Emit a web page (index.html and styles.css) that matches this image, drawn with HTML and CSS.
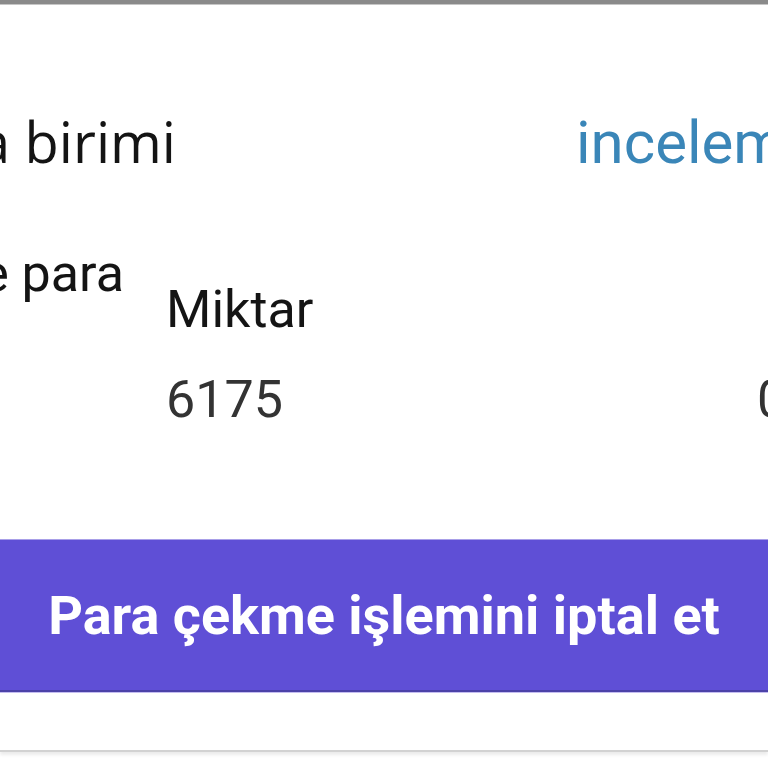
FILE: index.html
```html
<!DOCTYPE html>
<html lang="tr">
  <head>
    <meta charset="UTF-8" />
    <meta name="viewport" content="width=device-width,initial-scale=1.0" />
    <title>Para çekme</title>
    <link rel="stylesheet" href="styles.css">
  </head>
  <body>
    <div class="top-line"></div>
    <div class="sheet">
      <div class="head">
        <div class="head-label">
          <span>Para birimi</span>
        </div>
        <a class="review-link" href="#">inceleme</a>
      </div>
      <div class="details">
        <div class="detail-label">
          <span>Çekme para</span>
        </div>
        <div class="amount-col">
          <div class="col-title">Miktar</div>
          <div class="col-value">6175</div>
        </div>
        <div class="fee-col">
          <div class="col-title">&nbsp;</div>
          <div class="col-value">0,00</div>
        </div>
      </div>
      <button class="cancel-button" type="button">Para çekme işlemini iptal et</button>
      <div class="bottom-space"></div>
    </div>
  </body>
</html>
```

FILE: styles.css
```css
html,
body {
  margin: 0;
  width: 768px;
  height: 768px;
  overflow: hidden;
  background: #fff;
}
.top-line {
  height: 4px;
  background-color: #8a8a8a;
  border-bottom: 1px solid #c6c6c6;
}
.sheet {
  white-space: nowrap;
}
.head {
  display: flex;
  align-items: baseline;
  padding-top: 108px;
}
.head-label {
  display: flex;
  justify-content: flex-end;
  width: 176px;
  flex-shrink: 0;
  font-family: "Open Sans", sans-serif;
  font-size: 56px;
  line-height: 1;
  color: #141414;
}
.review-link {
  margin-left: 400px;
  font-family: Roboto, sans-serif;
  font-size: 60px;
  line-height: 1;
  color: #3a86b8;
  text-decoration: none;
}
.details {
  display: flex;
  align-items: flex-start;
  margin-top: 75px;
  font-family: Roboto, sans-serif;
}
.detail-label {
  display: flex;
  justify-content: flex-end;
  width: 124px;
  margin-right: 42px;
  flex-shrink: 0;
  font-size: 52px;
  line-height: 1;
  color: #141414;
}
.amount-col {
  width: 591px;
  flex-shrink: 0;
  margin-top: 36px;
}
.fee-col {
  margin-top: 36px;
}
.col-title {
  font-size: 52px;
  line-height: 1;
  color: #141414;
}
.col-value {
  margin-top: 38px;
  font-size: 52px;
  line-height: 1;
  color: #333;
}
.cancel-button {
  display: block;
  width: 100%;
  height: 153px;
  margin-top: 113px;
  padding: 0;
  border: 0;
  border-top: 1px solid #a89fe8;
  border-bottom: 2px solid #4b41a8;
  box-shadow: 0 1px 0 #c4bdf0;
  background-color: #5f4fd6;
  color: #fff;
  font-family: Roboto, sans-serif;
  font-weight: bold;
  font-size: 54px;
}
.bottom-space {
  height: 58px;
  border-bottom: 2px solid #d2d2d2;
  box-shadow: 0 3px 3px #ececec;
}
```
